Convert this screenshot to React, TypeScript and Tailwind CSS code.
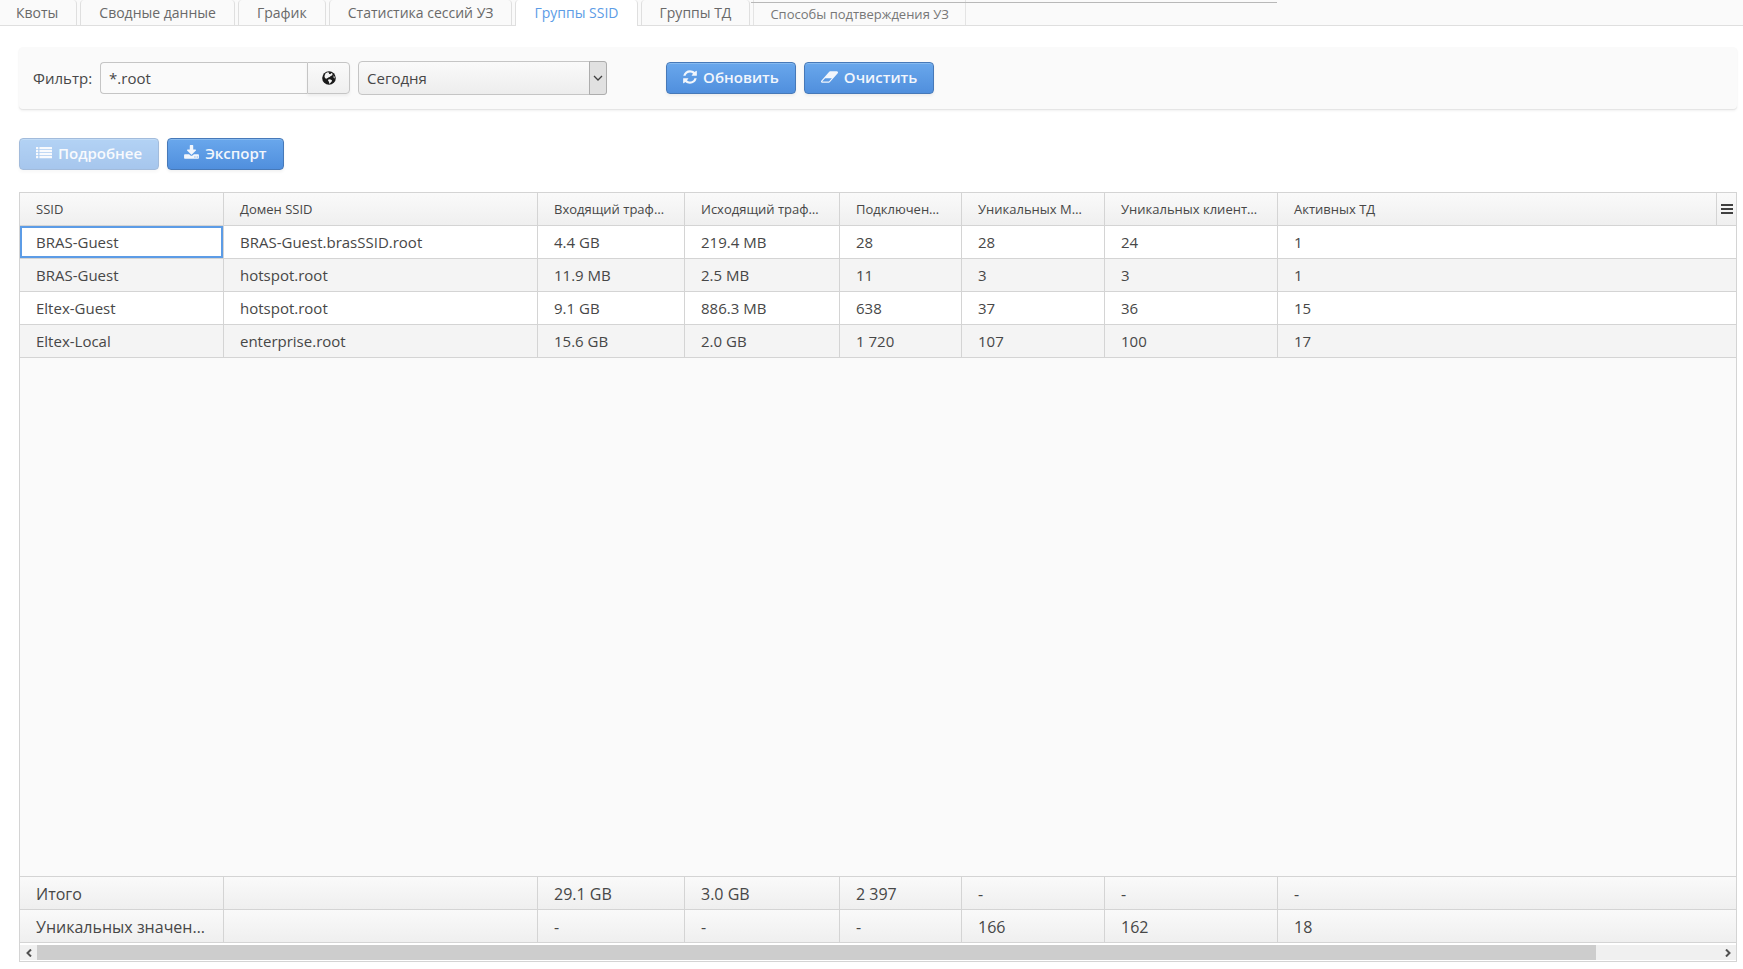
import type { ReactNode } from 'react';

const tabs = [
  'Квоты',
  'Сводные данные',
  'График',
  'Статистика сессий УЗ',
  'Группы SSID',
  'Группы ТД',
];
const activeTab = 'Группы SSID';

const columns = [
  { title: 'SSID', width: 'w-[204px]' },
  { title: 'Домен SSID', width: 'w-[314px]' },
  { title: 'Входящий трафик', width: 'w-[147px]' },
  { title: 'Исходящий трафик', width: 'w-[155px]' },
  { title: 'Подключений', width: 'w-[122px]' },
  { title: 'Уникальных MAC', width: 'w-[143px]' },
  { title: 'Уникальных клиентов', width: 'w-[173px]' },
  { title: 'Активных ТД', width: '' },
];

const rows = [
  ['BRAS-Guest', 'BRAS-Guest.brasSSID.root', '4.4 GB', '219.4 MB', '28', '28', '24', '1'],
  ['BRAS-Guest', 'hotspot.root', '11.9 MB', '2.5 MB', '11', '3', '3', '1'],
  ['Eltex-Guest', 'hotspot.root', '9.1 GB', '886.3 MB', '638', '37', '36', '15'],
  ['Eltex-Local', 'enterprise.root', '15.6 GB', '2.0 GB', '1 720', '107', '100', '17'],
];

const totals = [
  ['Итого', '', '29.1 GB', '3.0 GB', '2 397', '-', '-', '-'],
  ['Уникальных значений', '', '-', '-', '-', '166', '162', '18'],
];

function RefreshIcon() {
  return (
    <svg viewBox="128 0 1536 1792" className="w-[14px] h-4" fill="currentColor" aria-hidden="true">
      <path d="M1639 1056q0 5-1 7-64 268-268 434.5t-478 166.5q-146 0-282.5-55t-243.5-157l-129 129q-19 19-45 19t-45-19-19-45v-448q0-26 19-45t45-19h448q26 0 45 19t19 45-19 45l-137 137q71 66 161 102t187 36q134 0 250-65t186-179q11-17 53-117 8-23 30-23h192q13 0 22.5 9.5t9.5 22.5zm25-800v448q0 26-19 45t-45 19h-448q-26 0-45-19t-19-45 19-45l138-138q-148-137-349-137-134 0-250 65t-186 179q-11 17-53 117-8 23-30 23h-199q-13 0-22.5-9.5t-9.5-22.5v-7q65-268 270-434.5t480-166.5q146 0 284 55.5t245 156.5l130-129q19-19 45-19t45 19 19 45z" />
    </svg>
  );
}

function EraserIcon() {
  return (
    <svg viewBox="64 0 1920 1792" className="w-[17px] h-4" fill="currentColor" aria-hidden="true">
      <path d="M960 1408l336-384h-768l-336 384h768zm1013-1077q15 34 9.5 71.5t-30.5 65.5l-896 1024q-38 44-96 44h-768q-38 0-69.5-20.5t-47.5-54.5q-15-34-9.5-71.5t30.5-65.5l896-1024q38-44 96-44h768q38 0 69.5 20.5t47.5 54.5z" />
    </svg>
  );
}

function DownloadIcon() {
  return (
    <svg viewBox="64 0 1664 1792" className="w-[15px] h-4" fill="currentColor" aria-hidden="true">
      <path d="M1344 1344q0-26-19-45t-45-19-45 19-19 45 19 45 45 19 45-19 19-45zm256 0q0-26-19-45t-45-19-45 19-19 45 19 45 45 19 45-19 19-45zm128-224v320q0 40-28 68t-68 28h-1472q-40 0-68-28t-28-68v-320q0-40 28-68t68-28h465l135 136q58 56 136 56t136-56l136-136h464q40 0 68 28t28 68zm-325-569q17 41-14 70l-448 448q-18 19-45 19t-45-19l-448-448q-31-29-14-70 17-39 59-39h256v-448q0-26 19-45t45-19h256q26 0 45 19t19 45v448h256q42 0 59 39z" />
    </svg>
  );
}

function ListIcon() {
  return (
    <svg viewBox="0 0 16 16" className="w-4 h-4" fill="currentColor" aria-hidden="true">
      {[2, 5, 8, 11].map((y) => (
        <g key={y}>
          <rect x="0" y={y} width="2.3" height="2.2" rx="0.3" />
          <rect x="3.4" y={y} width="12.6" height="2.2" rx="0.3" />
        </g>
      ))}
    </svg>
  );
}

function GlobeIcon() {
  return (
    <svg viewBox="0 0 14 14" className="w-[14px] h-[14px]" aria-hidden="true">
      <circle cx="7" cy="7" r="6.8" fill="#1a1a1a" />
      <path d="M3.6 2.2 5.6 1.3l1.8.5-.6.9 1.5.5L9.4 2l1.2.8-.3 1.5-1.5.7-1.1 1.1-1.4.3-.9.9-.9-.2.3 1.1-1.5-.9-.8-1.4.2-1.7z" fill="#f4f4f4" />
      <path d="M6.3 8.4 8 8.2l2 1.1-.4 1.4-1.3 1.2-.8 1.1-.6-2.2-.9-1.2z" fill="#f4f4f4" />
      <path d="M11.6 4.2l1.1 1.9-.1 1.5-1-.9z" fill="#f4f4f4" />
    </svg>
  );
}

function Button({ icon, children, disabled }: { icon: ReactNode; children: ReactNode; disabled?: boolean }) {
  return (
    <button
      disabled={disabled}
      className="h-8 px-4 pb-0.5 flex items-center gap-1.5 rounded-[4px] border border-[#4779b8] bg-gradient-to-b from-[#69a7ec] to-[#508fdd] text-[15px] font-semibold text-[#f2f6fc] shadow-[inset_0_1px_0_#86baf0,0_2px_3px_rgba(0,0,0,0.05)] disabled:opacity-50"
    >
      {icon}
      <span>{children}</span>
    </button>
  );
}

function Chevron({ left }: { left?: boolean }) {
  return (
    <svg viewBox="0 0 8 8" className="w-2 h-2" fill="none" stroke="#505050" strokeWidth="2" aria-hidden="true">
      <path d={left ? 'M6 .5 2.5 4 6 7.5' : 'M2 .5 5.5 4 2 7.5'} />
    </svg>
  );
}

export default function App() {
  return (
    <div className="min-h-screen flex flex-col bg-white font-['Open_Sans',sans-serif] text-[15px] leading-6 text-[#474747]">
      <nav className="relative h-[26px] flex gap-[3px] border-b border-[#dfdfdf] bg-[#fafafa]">
        {tabs.map((tab, index) => (
          <button
            key={tab}
            className={
              tab === activeTab
                ? 'h-[26px] px-[18px] text-sm whitespace-nowrap rounded-t-[4px] border-x border-[#dfdfdf] bg-white text-[#5c9ce6]'
                : `h-[25px] text-sm whitespace-nowrap rounded-t-[4px] border-r border-[#dfdfdf] text-[#696969] ${
                    index === 0 ? 'pl-4 pr-[18px]' : 'px-[18px] border-l'
                  }`
            }
          >
            {tab}
          </button>
        ))}
        <button className="h-[25px] px-4 pt-0.5 text-[13px] whitespace-nowrap border-x border-[#e4e4e4] text-[#777777]">
          Способы подтверждения УЗ
        </button>
        <div className="absolute left-[751px] top-[2px] w-[526px] border-t border-[#b8b8b8]" />
      </nav>

      <main className="flex-1 flex flex-col pl-[19px] pr-[6px] pb-[7px] pt-[21px]">
        <form
          className="h-[62px] px-[14px] flex items-center rounded-[4px] bg-[#fafafa] shadow-[0_1px_1px_#e4e4e4,0_2px_3px_rgba(0,0,0,0.05)]"
          onSubmit={(event) => event.preventDefault()}
        >
          <label htmlFor="filter" className="mr-2">
            Фильтр:
          </label>
          <input
            id="filter"
            defaultValue="*.root"
            className="w-[207px] h-8 px-2 rounded-l-[4px] border border-[#c5c5c5] border-r-0 bg-[#fafafa] outline-none"
          />
          <button
            aria-label="Домен"
            className="w-[43px] h-8 mr-2 flex items-center justify-center rounded-r-[4px] border border-[#c5c5c5] bg-gradient-to-b from-[#fafafa] to-[#efefef] shadow-[0_2px_3px_rgba(0,0,0,0.05)]"
          >
            <GlobeIcon />
          </button>
          <div className="relative mr-[59px]">
            <select
              aria-label="Период"
              className="block w-[249px] h-[34px] px-2 appearance-none rounded-[4px] border border-[#c5c5c5] bg-gradient-to-b from-[#fafafa] to-[#ededed] outline-none"
            >
              <option>Сегодня</option>
            </select>
            <span className="absolute right-0 inset-y-0 w-[18px] flex items-center justify-center border border-[#adadad] rounded-r-[3px] bg-[#e1e1e1] pointer-events-none">
              <svg viewBox="0 0 10 6" className="w-[10px] h-[6px]" fill="none" stroke="#404040" strokeWidth="1.3" aria-hidden="true">
                <path d="M1 1l4 4 4-4" />
              </svg>
            </span>
          </div>
          <div className="flex gap-2">
            <Button icon={<RefreshIcon />}>Обновить</Button>
            <Button icon={<EraserIcon />}>Очистить</Button>
          </div>
        </form>

        <div className="flex gap-2 mt-[29px] mb-[22px]">
          <Button icon={<ListIcon />} disabled>
            Подробнее
          </Button>
          <Button icon={<DownloadIcon />}>Экспорт</Button>
        </div>

        <div className="flex-1 flex flex-col border border-[#d4d4d4] bg-[#fafafa]">
          <div className="flex-1 flex flex-col">
            <table className="w-full flex-1 table-fixed border-separate border-spacing-0">
              <thead>
                <tr className="h-[33px] bg-gradient-to-b from-[#fafafa] to-[#efefef]">
                  {columns.map((column, index) => (
                    <th
                      key={column.title}
                      className={`${column.width} px-4 text-left text-[13px] font-normal truncate border-b border-[#d4d4d4] ${
                        index < 7 ? 'border-r' : ''
                      }`}
                    >
                      {column.title}
                    </th>
                  ))}
                  <th className="w-5 border-b border-l border-[#d4d4d4]">
                    <button aria-label="Столбцы" className="w-full h-8 flex items-center justify-center">
                      <svg viewBox="0 0 12 10" className="w-3 h-[10px]" fill="#404040" aria-hidden="true">
                        <path d="M0 0h12v2H0zM0 4h12v2H0zM0 8h12v2H0z" />
                      </svg>
                    </button>
                  </th>
                </tr>
              </thead>
              <tbody>
                {rows.map((row, rowIndex) => (
                  <tr key={rowIndex} className="h-[33px] bg-white even:bg-[#f4f4f4]">
                    {row.map((cell, index) => (
                      <td
                        key={index}
                        colSpan={index === 7 ? 2 : 1}
                        className={`px-4 truncate border-b border-[#d4d4d4] ${index < 7 ? 'border-r' : ''} ${
                          rowIndex === 0 && index === 0 ? 'shadow-[inset_0_0_0_2px_#5c9ce6]' : ''
                        }`}
                      >
                        {cell}
                      </td>
                    ))}
                  </tr>
                ))}
                <tr>
                  <td colSpan={9} />
                </tr>
              </tbody>
              <tfoot>
                {totals.map((row) => (
                  <tr key={row[0]} className="h-[33px] bg-gradient-to-b from-[#fafafa] to-[#efefef]">
                    {row.map((cell, index) => (
                      <td
                        key={index}
                        colSpan={index === 7 ? 2 : 1}
                        className={`px-4 pt-0.5 text-base truncate border-t border-[#d4d4d4] ${index < 7 ? 'border-r' : ''}`}
                      >
                        {cell}
                      </td>
                    ))}
                  </tr>
                ))}
              </tfoot>
            </table>
          </div>
          <div className="h-[19px] pt-[2px] pb-px border-t border-[#d4d4d4] bg-white">
            <div className="h-full flex items-center bg-[#f0f0f0]">
              <button aria-label="Влево" className="w-[17px] flex justify-center">
                <Chevron left />
              </button>
              <div className="flex-1 h-full">
                <div className="w-[92.7%] h-full bg-[#cdcdcd]" />
              </div>
              <button aria-label="Вправо" className="w-[17px] flex justify-center">
                <Chevron />
              </button>
            </div>
          </div>
        </div>
      </main>
    </div>
  );
}
